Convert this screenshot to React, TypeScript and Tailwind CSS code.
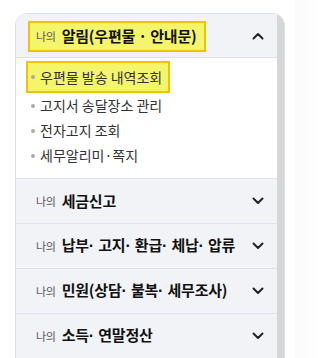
import React from "react";

const Up = () => (
  <svg width="12" height="8" viewBox="0 0 12 8" fill="none">
    <path d="M1.5 6.5L6 2L10.5 6.5" stroke="#222" strokeWidth="2" strokeLinecap="round" strokeLinejoin="round" />
  </svg>
);
const Down = () => (
  <svg width="12" height="8" viewBox="0 0 12 8" fill="none">
    <path d="M1.5 1.5L6 6L10.5 1.5" stroke="#222" strokeWidth="2" strokeLinecap="round" strokeLinejoin="round" />
  </svg>
);

const rows = ["세금신고", "납부· 고지· 환급· 체납· 압류", "민원(상담· 불복· 세무조사)", "소득· 연말정산"];
const items = ["고지서 송달장소 관리", "전자고지 조회", "세무알리미·쪽지"];

const Label = ({ text }: { text: string }) => {
  const parts = text.split("· ");
  return (
    <span className="text-[15px] font-bold text-[#111] tracking-[-0.2px] whitespace-pre">
      {parts.map((p, i) => (
        <React.Fragment key={i}>
          {p}
          {i < parts.length - 1 && (
            <span className="font-['Liberation_Sans',sans-serif] text-[16px]">{"· "}</span>
          )}
        </React.Fragment>
      ))}
    </span>
  );
};

export default function App() {
  return (
    <div
      className="w-[319px] h-[358px] overflow-hidden bg-white flex"
      style={{ fontFamily: '"Noto Sans CJK KR", "Noto Sans", sans-serif' }}
    >
      <div className="w-[15px] shrink-0" />
      <div className="mt-[13px] w-[270px] shrink-0 flex border border-[#dde0ec] rounded-t-[12px] overflow-hidden self-start">
        <div className="flex-1 flex flex-col">
          <div className="h-[44px] bg-[#f2f3f7] border-b border-[#dfe2ee] flex items-center justify-between pl-[12px] pr-[13px]">
            <div className="h-[31px] border-2 border-[#f2c200] bg-[#f5f56c] flex items-center pl-[6px] pr-[8px] gap-[6px] mt-[1px]">
              <span className="text-[11px] text-[#555] tracking-[-0.3px]">나의</span>
              <span className="text-[15px] font-bold text-[#111] tracking-[-0.2px]">알림(우편물 · 안내문)</span>
            </div>
            <Up />
          </div>
          <div className="bg-white border-b border-[#dfe2ee] pt-[3px] pb-[10px] pl-[10px] flex flex-col">
            <div className="h-[32px] self-start flex border-2 border-[#f2c200] bg-[#f5f56c] items-center pl-[3px] pr-[6px] gap-[5px]">
              <span className="w-[4px] h-[4px] rounded-full bg-[#aaa]" />
              <span className="text-[14px] text-[#333]">우편물 발송 내역조회</span>
            </div>
            {items.map((t) => (
              <div key={t} className="h-[25px] flex items-center pl-[5px] gap-[5px]">
                <span className="w-[4px] h-[4px] rounded-full bg-[#aaa]" />
                <span className="text-[14px] text-[#333]">{t}</span>
              </div>
            ))}
          </div>
          {rows.map((r) => (
            <div
              key={r}
              className="h-[45px] bg-[#f2f3f7] border-b border-[#dfe2ee] flex items-center justify-between pl-[20px] pr-[13px]"
            >
              <div className="flex items-center gap-[6px]">
                <span className="text-[11px] text-[#555] tracking-[-0.3px]">나의</span>
                <Label text={r} />
              </div>
              <Down />
            </div>
          ))}
        </div>
        <div className="w-[7px] bg-[#d6d6d6]" />
      </div>
      <div className="w-[10px] shrink-0" />
      <div className="flex-1 bg-gradient-to-r from-[#fafafa] to-white" />
    </div>
  );
}
